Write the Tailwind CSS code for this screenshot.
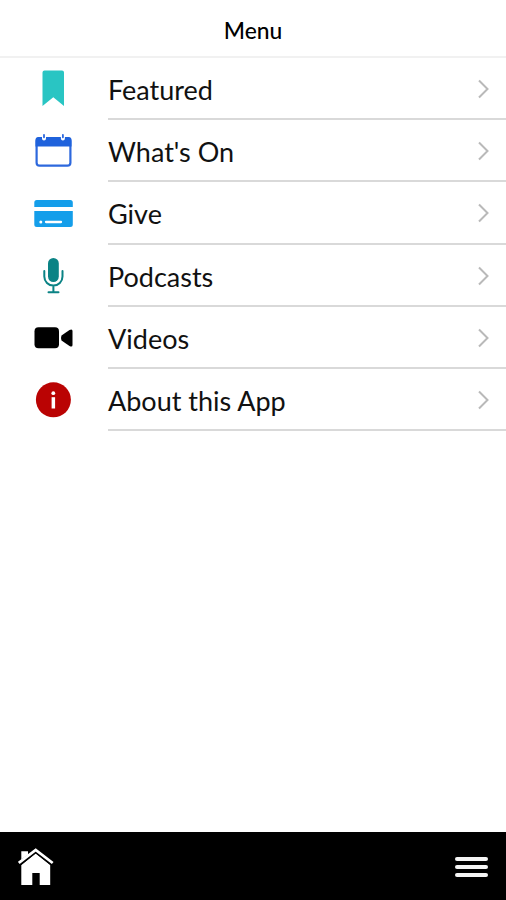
<!DOCTYPE html>
<html lang="en">
<head>
    <meta charset="UTF-8">
    <meta name="viewport" content="width=device-width, initial-scale=1.0">
    <title>Menu</title>
    <script src="https://cdn.jsdelivr.net/npm/@tailwindcss/browser@4"></script>
</head>
<body class="bg-white text-[#111] font-['Lato',sans-serif]">
    <div class="flex flex-col h-[900px] overflow-hidden">
        <header class="h-[58px] shrink-0 flex items-center justify-center border-b-2 border-[#f1f1f1] pt-1">
            <h1 class="text-[22.8px] leading-none font-medium text-black">Menu</h1>
        </header>

        <ul class="flex-1">
            <li class="flex h-[62.2px] pl-5">
                <svg class="w-[70px] h-[60px] shrink-0 self-end" viewBox="0 0 70 60">
                    <path fill="#29c5c3" d="M24.500 10.500h17.500a2 2 0 0 1 2 2v33.400L33.300 37.300 22.500 45.900V12.500a2 2 0 0 1 2-2z"/>
                </svg>
                <div class="flex-1 ml-[18px] flex items-center justify-between border-b-2 border-[#d9d9d9] pr-4">
                    <span class="text-[27px] leading-none pt-[3px]">Featured</span>
                    <svg class="w-3.5 h-5 mt-0.5" viewBox="0 0 14 20" fill="none" stroke="#b9b9b9" stroke-width="2"><path d="M3 1.500l8.500 8.500L3 18.500"/></svg>
                </div>
            </li>
            <li class="flex h-[62.2px] pl-5">
                <svg class="w-[70px] h-[60px] shrink-0 self-end" viewBox="0 0 70 60">
                    <rect x="16.600" y="16.300" width="33.800" height="27.400" rx="3" fill="#fff" stroke="#2d68dd" stroke-width="2.200"/>
                    <path fill="#1f62dc" d="M15.500 24.500V18a3 3 0 0 1 3-3h30a3 3 0 0 1 3 3v6.500z"/>
                    <path d="M24 12v4.500M42.900 12v4.500" stroke="#fff" stroke-width="4" stroke-linecap="round"/>
                    <path d="M24 12.800v2.500M42.900 12.800v2.500" stroke="#2d68dd" stroke-width="1.800" stroke-linecap="round"/>
                </svg>
                <div class="flex-1 ml-[18px] flex items-center justify-between border-b-2 border-[#d9d9d9] pr-4">
                    <span class="text-[27px] leading-none pt-[3px]">What's On</span>
                    <svg class="w-3.5 h-5 mt-0.5" viewBox="0 0 14 20" fill="none" stroke="#b9b9b9" stroke-width="2"><path d="M3 1.500l8.500 8.500L3 18.500"/></svg>
                </div>
            </li>
            <li class="flex h-[62.2px] pl-5">
                <svg class="w-[70px] h-[60px] shrink-0 self-end" viewBox="0 0 70 60" fill="#149eea">
                    <path d="M14.300 22v-4.500a2.500 2.500 0 0 1 2.500-2.500h33.500a2.500 2.500 0 0 1 2.500 2.500V22z"/>
                    <path d="M14.300 26h38.500v13.500a2.500 2.500 0 0 1-2.500 2.500H16.800a2.500 2.500 0 0 1-2.500-2.500z"/>
                    <circle cx="20.800" cy="37" r="1.500" fill="#fff"/>
                    <path d="M26 37h15" stroke="#fff" stroke-width="2.300" stroke-linecap="round"/>
                </svg>
                <div class="flex-1 ml-[18px] flex items-center justify-between border-b-2 border-[#d9d9d9] pr-4">
                    <span class="text-[27px] leading-none pt-[3px]">Give</span>
                    <svg class="w-3.5 h-5 mt-0.5" viewBox="0 0 14 20" fill="none" stroke="#b9b9b9" stroke-width="2"><path d="M3 1.500l8.500 8.500L3 18.500"/></svg>
                </div>
            </li>
            <li class="flex h-[62.2px] pl-5">
                <svg class="w-[70px] h-[60px] shrink-0 self-end" viewBox="0 0 70 60">
                    <rect x="28" y="11" width="10.800" height="24" rx="5.400" fill="#0b8385"/>
                    <path d="M24.300 24v5.500a9.100 9.100 0 0 0 18.200 0V24M33.400 38.500v6.500M28.500 45.300h10" fill="none" stroke="#0b8385" stroke-width="2" stroke-linecap="round"/>
                </svg>
                <div class="flex-1 ml-[18px] flex items-center justify-between border-b-2 border-[#d9d9d9] pr-4">
                    <span class="text-[27px] leading-none pt-[3px]">Podcasts</span>
                    <svg class="w-3.5 h-5 mt-0.5" viewBox="0 0 14 20" fill="none" stroke="#b9b9b9" stroke-width="2"><path d="M3 1.500l8.500 8.500L3 18.500"/></svg>
                </div>
            </li>
            <li class="flex h-[62.2px] pl-5">
                <svg class="w-[70px] h-[60px] shrink-0 self-end" viewBox="0 0 70 60" fill="#000">
                    <rect x="14.500" y="18.300" width="24.500" height="21" rx="4"/>
                    <path d="M41.500 26.500l8-5.500q3-1.500 3 1v14q0 2.500-3 1l-8-5.500q-1-2.500 0-5z"/>
                </svg>
                <div class="flex-1 ml-[18px] flex items-center justify-between border-b-2 border-[#d9d9d9] pr-4">
                    <span class="text-[27px] leading-none pt-[3px]">Videos</span>
                    <svg class="w-3.5 h-5 mt-0.5" viewBox="0 0 14 20" fill="none" stroke="#b9b9b9" stroke-width="2"><path d="M3 1.500l8.500 8.500L3 18.500"/></svg>
                </div>
            </li>
            <li class="flex h-[62.2px] pl-5">
                <svg class="w-[70px] h-[60px] shrink-0 self-end" viewBox="0 0 70 60">
                    <circle cx="33.400" cy="28.800" r="17.500" fill="#ba0303"/>
                    <circle cx="33.300" cy="22.200" r="1.900" fill="#fff"/>
                    <path d="M31.600 26.200h3.500v11.300h-3.500z" fill="#fff"/>
                </svg>
                <div class="flex-1 ml-[18px] flex items-center justify-between border-b-2 border-[#d9d9d9] pr-4">
                    <span class="text-[27px] leading-none pt-[3px]">About this App</span>
                    <svg class="w-3.5 h-5 mt-0.5" viewBox="0 0 14 20" fill="none" stroke="#b9b9b9" stroke-width="2"><path d="M3 1.500l8.500 8.500L3 18.500"/></svg>
                </div>
            </li>
        </ul>

        <nav class="h-[68px] shrink-0 flex items-center justify-between bg-black px-[18px] pt-0.5">
            <svg class="w-9 h-[38px]" viewBox="0 0 36 38" fill="#fff">
                <path d="M3.300 17L17.700 5.500 32.200 17v20H21.700V25h-7.400v12h-11z"/>
                <path d="M0.800 16.500L17.700 3.200l17 13.300" fill="none" stroke="#000" stroke-width="3.600"/>
                <path d="M3.300 11.500V3.200h6.700v3.500z"/>
                <path d="M0.800 15L17.700 1.900l17 13.100" fill="none" stroke="#fff" stroke-width="2.800"/>
            </svg>
            <div class="w-[33px] flex flex-col gap-1">
                <span class="h-1 rounded-xs bg-[#f5f5f5]"></span>
                <span class="h-1 rounded-xs bg-[#f5f5f5]"></span>
                <span class="h-1 rounded-xs bg-[#f5f5f5]"></span>
            </div>
        </nav>
    </div>
</body>
</html>
